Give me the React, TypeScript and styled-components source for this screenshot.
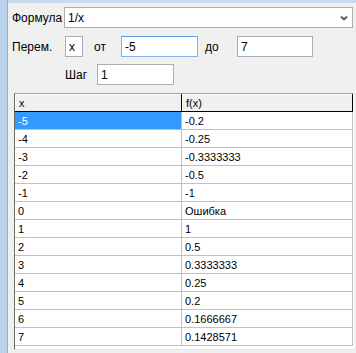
import React from 'react';
import styled, { createGlobalStyle } from 'styled-components';

const GlobalStyle = createGlobalStyle`
  html, body {
    margin: 0;
    padding: 0;
    background: #f0f0f0;
  }
  body {
    font-family: "Liberation Sans", Arial, sans-serif;
    font-size: 11px;
    color: #000;
  }
`;

const Window = styled.div`
  display: flex;
  width: 356px;
  height: 353px;
  overflow: hidden;
  background: #f0f0f0;
`;

const FrameStrip = styled.div`
  width: 7px;
  flex-shrink: 0;
  background: #b9d1ea;
  border-right: 1px solid #9aaec6;
`;

const Panel = styled.div`
  flex: 1;
  display: flex;
  flex-direction: column;
  border-top: 3px solid #c8d9ee;
  padding: 4px 0 0 4px;
  background: #f0f0f0;
`;

const Row = styled.div<{ $top?: number; $indent?: number }>`
  display: flex;
  align-items: center;
  margin-top: ${(p) => p.$top ?? 0}px;
  padding-left: ${(p) => p.$indent ?? 0}px;
`;

const Label = styled.span<{ $width: number; $gap?: number }>`
  width: ${(p) => p.$width}px;
  margin-left: ${(p) => p.$gap ?? 0}px;
  flex-shrink: 0;
  white-space: nowrap;
  font-size: 12px;
`;

const TextBox = styled.div<{ $width: number; $focused?: boolean }>`
  width: ${(p) => p.$width}px;
  height: 21px;
  box-sizing: border-box;
  flex-shrink: 0;
  display: flex;
  align-items: center;
  padding-left: 3px;
  font-size: 12px;
  background: #fff;
  border: 1px solid ${(p) => (p.$focused ? '#7eb4ea' : '#abadb3')};
  border-top-color: ${(p) => (p.$focused ? '#569de5' : '#abadb3')};
`;

const Combo = styled(TextBox)`
  justify-content: space-between;
  padding-right: 4px;
  border-color: #acacac;
`;

const Grid = styled.div`
  margin: 8px 0 0 2px;
  width: 340px;
  height: 257px;
  box-sizing: border-box;
  background: #fff;
  border-top: 1px solid #a0a0a0;
  border-left: 1px solid #696969;
  border-right: 1px solid #ffffff;
  border-bottom: 1px solid #e3e3e3;
  display: grid;
  grid-template-columns: 167px 171px;
  grid-auto-rows: 18px;
  align-content: start;
`;

const HeadCell = styled.div`
  background: #f0f0f0;
  border-right: 1px solid #000;
  border-bottom: 1px solid #000;
  box-shadow: inset 1px 1px 0 #fff;
  display: flex;
  align-items: center;
  padding-left: 4px;
  color: #000;
`;

const Cell = styled.div<{ $selected?: boolean }>`
  background: ${(p) => (p.$selected ? '#3399ff' : '#fff')};
  color: ${(p) => (p.$selected ? '#fff' : '#000')};
  border-right: 1px solid #c0c0c0;
  border-bottom: 1px solid #c0c0c0;
  display: flex;
  align-items: center;
  padding-left: 3px;
`;

const Chevron = () => (
  <svg width="8" height="6" viewBox="0 0 8 6">
    <path d="M1 1.5 L4 4.5 L7 1.5" fill="none" stroke="#555" strokeWidth="1.8" />
  </svg>
);

const rows: [string, string][] = [
  ['-5', '-0.2'],
  ['-4', '-0.25'],
  ['-3', '-0.3333333'],
  ['-2', '-0.5'],
  ['-1', '-1'],
  ['0', 'Ошибка'],
  ['1', '1'],
  ['2', '0.5'],
  ['3', '0.3333333'],
  ['4', '0.25'],
  ['5', '0.2'],
  ['6', '0.1666667'],
  ['7', '0.1428571'],
];

export default function App() {
  return (
    <Window>
      <GlobalStyle />
      <FrameStrip />
      <Panel>
        <Row>
          <Label $width={52}>Формула</Label>
          <Combo $width={289}>
            <span>1/x</span>
            <Chevron />
          </Combo>
        </Row>
        <Row $top={8}>
          <Label $width={53}>Перем.</Label>
          <TextBox $width={18}>x</TextBox>
          <Label $width={27} $gap={11}>от</Label>
          <TextBox $width={77} $focused>-5</TextBox>
          <Label $width={32} $gap={7}>до</Label>
          <TextBox $width={76}>7</TextBox>
        </Row>
        <Row $top={7} $indent={53}>
          <Label $width={32}>Шаг</Label>
          <TextBox $width={77}>1</TextBox>
        </Row>
        <Grid>
          <HeadCell>x</HeadCell>
          <HeadCell>f(x)</HeadCell>
          {rows.map(([x, fx], i) => (
            <React.Fragment key={x}>
              <Cell $selected={i === 0}>{x}</Cell>
              <Cell>{fx}</Cell>
            </React.Fragment>
          ))}
        </Grid>
      </Panel>
    </Window>
  );
}
